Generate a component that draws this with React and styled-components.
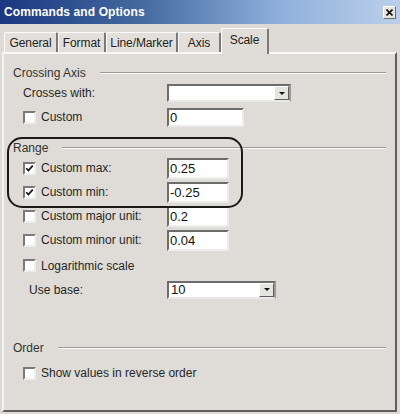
import React from 'react';
import styled, { createGlobalStyle, css } from 'styled-components';

const Global = createGlobalStyle`
  html, body { margin: 0; padding: 0; background: #dedbd6; }
  body { font-family: "Liberation Sans", Arial, sans-serif; }
`;

const Window = styled.div`
  width: 400px;
  height: 414px;
  box-sizing: border-box;
  background: #dedbd6;
  display: flex;
  flex-direction: column;
  overflow: hidden;
`;

const TitleBar = styled.div`
  height: 24px;
  flex: none;
  display: flex;
  align-items: center;
  justify-content: space-between;
  padding: 0 4px;
  background: linear-gradient(to right, #1a3781 0%, #44699f 35%, #8fb0dc 70%, #bccfea 100%);
`;

const Title = styled.span`
  color: #fff;
  font-weight: bold;
  font-size: 12px;
  letter-spacing: 0.1px;
`;

const CloseButton = styled.span`
  width: 13px;
  height: 13px;
  box-sizing: border-box;
  display: flex;
  align-items: center;
  justify-content: center;
  background: #e6e4e0;
  border: 1px solid;
  border-color: #fff #6b6b6b #6b6b6b #fff;
`;

const Body = styled.div`
  flex: 1;
  display: flex;
  flex-direction: column;
  padding: 4px 3px 2px 2px;
`;

const TabStrip = styled.div`
  height: 24px;
  display: flex;
  align-items: flex-end;
  padding-left: 2px;
`;

const Tab = styled.div`
  width: ${p => p.$w}px;
  height: 20px;
  box-sizing: border-box;
  display: flex;
  align-items: center;
  justify-content: center;
  font-size: 12px;
  letter-spacing: -0.1px;
  color: #222;
  background: #e3e0db;
  border-top: 1px solid #fbfbfb;
  border-left: 1px solid #fbfbfb;
  border-right: 2px solid #7a7a7a;
  border-radius: 2px 2px 0 0;
  ${p => p.$active && css`
    height: 26px;
    margin-bottom: -2px;
    padding-bottom: 3px;
    position: relative;
    z-index: 1;
    background: #e0ddd8;
  `}
`;

const Panel = styled.div`
  flex: 1;
  box-sizing: border-box;
  border: 2px solid;
  border-color: #f8f8f8 #5f5f5f #5f5f5f #f2f2f2;
  background: #dfdcd7;
  padding: 11px 9px 0 9px;
  display: flex;
  flex-direction: column;
`;

const SectionHeader = styled.div`
  display: flex;
  align-items: center;
  gap: 14px;
  height: 16px;
  font-size: 12px;
  color: #333;
  margin-top: ${p => p.$mt || 0}px;
  margin-bottom: ${p => p.$mb || 0}px;
  &::after {
    content: '';
    flex: 1;
    height: 0;
    border-top: 1px solid #9c9a97;
    border-bottom: 1px solid #fbfbfb;
  }
`;

const Highlight = styled.div`
  position: relative;
  margin-top: 11px;
  &::before {
    content: '';
    position: absolute;
    left: -6px;
    top: -3px;
    width: 236px;
    height: 71px;
    box-sizing: border-box;
    border: 2px solid #1a1a1a;
    border-radius: 15px;
    pointer-events: none;
  }
`;

const Row = styled.div`
  display: grid;
  grid-template-columns: 144px auto;
  align-items: center;
  height: ${p => p.$h || 24}px;
  padding-left: 10px;
`;

const Label = styled.div`
  display: flex;
  align-items: center;
  gap: 5px;
  font-size: 12px;
  color: #262626;
  white-space: nowrap;
  padding-left: ${p => p.$indent || 0}px;
`;

const Box = styled.span`
  width: 13px;
  height: 13px;
  flex: none;
  box-sizing: border-box;
  background: #fff;
  border: 2px solid;
  border-color: #7a7a7a #ededed #ededed #7a7a7a;
  display: flex;
  align-items: center;
  justify-content: center;
`;

const Field = styled.div`
  width: ${p => p.$w}px;
  height: ${p => p.$h || 20}px;
  box-sizing: border-box;
  background: #fff;
  border: 2px solid;
  border-color: #6c6c6c #ececec #ececec #6c6c6c;
  font-size: 13px;
  color: #111;
  display: flex;
  align-items: center;
  padding-left: 1px;
`;

const SelectBox = styled(Field)`
  border-color: #6c6c6c #9a9a9a #e8e8e8 #6c6c6c;
  padding-left: 2px;
`;

const DropButton = styled.span`
  margin-left: auto;
  width: 15px;
  height: 100%;
  box-sizing: border-box;
  background: #e6e4df;
  border: 1px solid;
  border-color: #fff #5f5f5f #5f5f5f #fff;
  display: flex;
  align-items: center;
  justify-content: center;
  &::after {
    content: '';
    border-left: 3px solid transparent;
    border-right: 3px solid transparent;
    border-top: 3px solid #111;
  }
`;

const Check = ({ checked }) => (
  <Box>
    {checked && (
      <svg width="9" height="9" viewBox="0 0 9 9">
        <path d="M1.2 4.2 L3.4 6.6 L7.8 1.6" fill="none" stroke="#111" strokeWidth="1.7" />
      </svg>
    )}
  </Box>
);

const CheckRow = ({ label, checked, value, w = 62, h = 21 }) => (
  <Row>
    <Label>
      <Check checked={checked} />
      {label}
    </Label>
    {value !== undefined && <Field $w={w} $h={h}>{value}</Field>}
  </Row>
);

const tabs = [
  { name: 'General', w: 54 },
  { name: 'Format', w: 48 },
  { name: 'Line/Marker', w: 72 },
  { name: 'Axis', w: 43 },
  { name: 'Scale', w: 48, active: true },
];

export default function App() {
  return (
    <>
      <Global />
      <Window>
        <TitleBar>
          <Title>Commands and Options</Title>
          <CloseButton>
            <svg width="7" height="7" viewBox="0 0 7 7">
              <path d="M0.5 0.5 L6.5 6.5 M6.5 0.5 L0.5 6.5" stroke="#111" strokeWidth="1.6" />
            </svg>
          </CloseButton>
        </TitleBar>
        <Body>
          <TabStrip>
            {tabs.map(t => (
              <Tab key={t.name} $w={t.w} $active={t.active}>{t.name}</Tab>
            ))}
          </TabStrip>
          <Panel>
            <SectionHeader>Crossing Axis</SectionHeader>
            <Row>
              <Label>Crosses with:</Label>
              <SelectBox $w={124} $h={18}><DropButton /></SelectBox>
            </Row>
            <CheckRow label="Custom" value="0" w={77} h={19} />

            <Highlight>
              <SectionHeader>Range</SectionHeader>
              <CheckRow label="Custom max:" checked value="0.25" />
              <CheckRow label="Custom min:" checked value="-0.25" />
            </Highlight>
            <CheckRow label="Custom major unit:" value="0.2" />
            <CheckRow label="Custom minor unit:" value="0.04" />
            <Row $h={27}>
              <Label>
                <Check />
                Logarithmic scale
              </Label>
            </Row>
            <Row $h={21}>
              <Label $indent={6}>Use base:</Label>
              <SelectBox $w={109} $h={18}>10<DropButton /></SelectBox>
            </Row>

            <SectionHeader $mt={40} $mb={5}>Order</SectionHeader>
            <CheckRow label="Show values in reverse order" />
          </Panel>
        </Body>
      </Window>
    </>
  );
}
